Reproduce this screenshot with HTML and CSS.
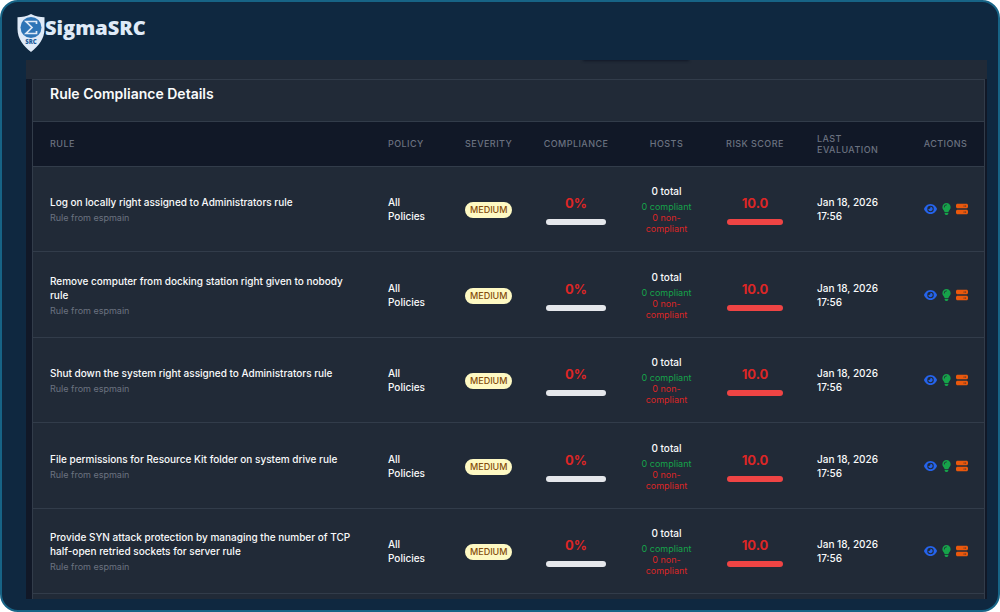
FILE: index.html
```html
<!DOCTYPE html>
<html lang="en">
<head>
    <meta charset="UTF-8">
    <meta name="viewport" content="width=device-width, initial-scale=1.0">
    <title>SigmaSRC</title>
    <link rel="stylesheet" href="styles.css">
</head>
<body>

<!-- Shared icons -->
<svg class="sprite" aria-hidden="true">
    <symbol id="icon-eye" viewBox="0 0 576 512">
        <path d="M288 32c-81 0-146 37-193 80C48 156 17 208 2 244c-3 8-3 16 0 24 15 36 46 88 93 132 47 43 112 80 193 80s146-37 193-80c47-44 78-96 93-132 3-8 3-16 0-24-15-36-46-88-93-132-47-43-112-80-193-80zM144 256a144 144 0 1 1 288 0 144 144 0 1 1-288 0zm144-64c0 35-29 64-64 64-7 0-14-1-20-3-6-2-12 1-12 7 0 7 1 14 3 21 14 51 67 82 118 68s82-67 68-118c-11-41-47-69-87-71-6 0-9 6-8 12 2 6 2 13 2 20z"/>
    </symbol>
    <symbol id="icon-bulb" viewBox="0 0 384 512">
        <path d="M272 384c10-32 30-59 49-86 5-7 10-14 15-21 20-29 32-64 32-101C368 79 289 0 192 0S16 79 16 176c0 37 12 72 32 101 5 7 10 14 15 21 19 27 39 54 49 86h160zm-80 128c44 0 80-36 80-80v-16H112v16c0 44 36 80 80 80zM112 176c0 9-7 16-16 16s-16-7-16-16c0-62 50-112 112-112 9 0 16 7 16 16s-7 16-16 16c-44 0-80 36-80 80z"/>
    </symbol>
    <symbol id="icon-server" viewBox="0 0 512 512">
        <path fill-rule="evenodd" d="M64 32C29 32 0 61 0 96v64c0 35 29 64 64 64h384c35 0 64-29 64-64V96c0-35-29-64-64-64H64zm280 72a24 24 0 1 1 0 48 24 24 0 1 1 0-48zm40 24a24 24 0 1 1 48 0 24 24 0 1 1-48 0zM64 288c-35 0-64 29-64 64v64c0 35 29 64 64 64h384c35 0 64-29 64-64v-64c0-35-29-64-64-64H64zm280 72a24 24 0 1 1 0 48 24 24 0 1 1 0-48zm40 24a24 24 0 1 1 48 0 24 24 0 1 1-48 0z"/>
    </symbol>
</svg>

<div class="frame">
    <header class="brand">
        <svg class="brand-logo" viewBox="0 0 28 38" aria-hidden="true">
            <path fill="#dfeaf7" d="M14 0C10 2.500 5 3 .5 3.200V15c0 10 6 17 13.500 23C21.500 32 27.500 25 27.500 15V3.200C23 3 18 2.500 14 0z"/>
            <circle cx="14" cy="13.500" r="10.500" fill="#2e75b6"/>
            <path fill="none" stroke="#dfeaf7" stroke-width="1.700" d="M19.500 10V7.500H9l6 6-6 6h10.500V17"/>
            <text class="logo-text" x="14" y="30" text-anchor="middle">SRC</text>
        </svg>
        <span class="brand-name">SigmaSRC</span>
    </header>

    <main class="panel">
        <div class="panel-top"><span class="panel-shadow"></span></div>
        <section class="card">
            <h1 class="card-title">Rule Compliance Details</h1>
            <table class="rules">
                <colgroup>
                    <col>
                    <col class="col-policy">
                    <col class="col-severity">
                    <col class="col-compliance">
                    <col class="col-hosts">
                    <col class="col-risk">
                    <col class="col-evaluation">
                    <col class="col-actions">
                </colgroup>
                <thead>
                    <tr>
                        <th>RULE</th>
                        <th>POLICY</th>
                        <th>SEVERITY</th>
                        <th class="center">COMPLIANCE</th>
                        <th class="center">HOSTS</th>
                        <th class="center">RISK SCORE</th>
                        <th>LAST EVALUATION</th>
                        <th class="center">ACTIONS</th>
                    </tr>
                </thead>
                <tbody id="ruleRows"></tbody>
            </table>
        </section>
    </main>
</div>

<script src="script.js"></script>
</body>
</html>
```
FILE: styles.css
```css
* {
    box-sizing: border-box;
}
body {
    margin: 0;
    background-color: #fff;
    font-family: Inter, "Liberation Sans", sans-serif;
    font-size: 10px;
    line-height: 14px;
    color: #f9fafb;
}
.sprite {
    display: none;
}
.frame {
    display: flex;
    flex-direction: column;
    min-height: 100vh;
    padding: 0 11px 11px 24px;
    background-color: #0f2840;
    border: 2px solid #176486;
    border-radius: 18px;
}

/* Brand */
.brand {
    display: flex;
    align-items: flex-start;
    height: 58px;
    padding-top: 12px;
    margin-left: -9px;
}
.brand-logo {
    width: 28px;
    height: 38px;
}
.logo-text {
    font-family: "Open Sans", sans-serif;
    font-size: 6px;
    font-weight: 800;
    fill: #1f5c99;
}
.brand-name {
    font-family: "Open Sans", sans-serif;
    font-size: 20px;
    font-weight: 800;
    line-height: 28px;
    color: #dfeaf7;
}

/* Panel */
.panel {
    display: flex;
    flex: 1;
    flex-direction: column;
    background-color: #111827;
}
.panel-top {
    position: relative;
    height: 19px;
    overflow: hidden;
    background-color: #212a37;
}
.panel-shadow {
    position: absolute;
    top: -4px;
    left: 58%;
    width: 11%;
    height: 4px;
    box-shadow: 0 1px 3px #111827;
}
.card {
    flex: 1;
    margin: 0 2px 0 6px;
    background-color: #212a37;
    border: 1px solid #323c4a;
    border-bottom: 0;
}
.card-title {
    margin: 0;
    padding: 4px 17px 17px;
    font-size: 14px;
    font-weight: 600;
    line-height: 20px;
}

/* Table */
.rules {
    width: 100%;
    table-layout: fixed;
    border-collapse: collapse;
}
.col-policy { width: 77px; }
.col-severity { width: 81px; }
.col-compliance { width: 94px; }
.col-hosts { width: 87px; }
.col-risk { width: 90px; }
.col-evaluation { width: 107px; }
.col-actions { width: 77px; }
.rules th {
    height: 45px;
    padding: 0 17px 1px;
    background-color: #111827;
    border-top: 1px solid #323c4a;
    font-size: 9px;
    font-weight: 500;
    line-height: 11px;
    letter-spacing: 0.05em;
    text-align: left;
    color: #6b7280;
}
.rules td {
    height: 85px;
    padding: 0 17px;
    border-top: 1px solid #323c4a;
    font-weight: 500;
}
.rules tbody tr:nth-child(even) td {
    height: 86px;
}
.rules tbody {
    border-bottom: 1px solid #323c4a;
}
.rules .center {
    text-align: center;
}
.rules th.center {
    padding: 0 10px 1px;
    white-space: nowrap;
}
.rules .rule,
.rules .severity {
    padding-top: 2px;
}
.rules .actions {
    padding: 0 10px;
}
.note {
    padding-top: 2px;
    font-size: 9px;
    font-weight: 400;
    line-height: 14px;
    color: #6b7280;
}
.badge {
    display: inline-block;
    padding: 1px 5px;
    background-color: #fef9c3;
    border-radius: 8px;
    font-size: 9px;
    vertical-align: middle;
    color: #854d0e;
}
.score {
    font-size: 13px;
    font-weight: 700;
    line-height: 20px;
    color: #dc2626;
}
.bar {
    height: 6px;
    margin-top: 6px;
    overflow: hidden;
    background-color: #e5e7eb;
    border-radius: 3px;
}
.bar-fill {
    height: 100%;
    background-color: #ef4444;
}
.hosts {
    margin: 0 -8px;
    font-size: 9px;
    font-weight: 400;
    line-height: 11px;
}
.hosts-total {
    margin-bottom: 3px;
    font-size: 10px;
    font-weight: 500;
    line-height: 14px;
}
.compliant {
    color: #16a34a;
}
.non-compliant {
    color: #dc2626;
}
.action-list {
    display: flex;
    gap: 5px;
    align-items: center;
    justify-content: center;
}
.action {
    display: flex;
    padding: 0;
    background: none;
    border: 0;
    cursor: pointer;
}
.action svg {
    width: 13px;
    height: 12px;
    fill: currentColor;
}
.action-view {
    color: #2563eb;
}
.action-advice {
    color: #16a34a;
}
.action-advice svg {
    width: 9px;
}
.action-hosts {
    color: #ea580c;
}
.action-hosts svg {
    width: 12px;
}
```
FILE: script.js
```js
const rules = [
    'Log on locally right assigned to Administrators rule',
    'Remove computer from docking station right given to nobody rule',
    'Shut down the system right assigned to Administrators rule',
    'File permissions for Resource Kit folder on system drive rule',
    'Provide SYN attack protection by managing the number of TCP half-open retried sockets for server rule'
];

function actionButton(type, icon, label) {
    return `<button class="action action-${type}" aria-label="${label}"><svg><use href="#icon-${icon}"/></svg></button>`;
}

// Table rows
document.getElementById('ruleRows').innerHTML = rules.map(name => `
    <tr>
        <td class="rule">
            <div>${name}</div>
            <div class="note">Rule from espmain</div>
        </td>
        <td>All Policies</td>
        <td class="severity"><span class="badge">MEDIUM</span></td>
        <td class="center">
            <div class="score">0%</div>
            <div class="bar"><div class="bar-fill" style="width: 0%"></div></div>
        </td>
        <td class="center">
            <div class="hosts">
                <div class="hosts-total">0 total</div>
                <div class="compliant">0 compliant</div>
                <div class="non-compliant">0 non-<br>compliant</div>
            </div>
        </td>
        <td class="center">
            <div class="score">10.0</div>
            <div class="bar"><div class="bar-fill" style="width: 100%"></div></div>
        </td>
        <td>Jan 18, 2026 17:56</td>
        <td class="actions">
            <div class="action-list">
                ${actionButton('view', 'eye', 'View')}
                ${actionButton('advice', 'bulb', 'Advice')}
                ${actionButton('hosts', 'server', 'Hosts')}
            </div>
        </td>
    </tr>`).join('');
```
